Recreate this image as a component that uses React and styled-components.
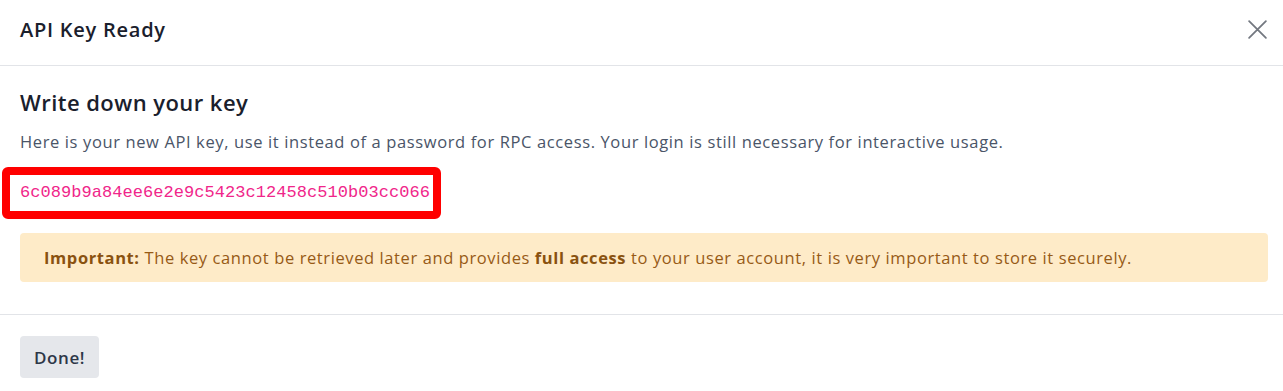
import styled, { createGlobalStyle } from "styled-components"

const Global = createGlobalStyle`
    *, *::before, *::after {
        box-sizing: border-box;
    }
    body {
        margin: 0;
        background: #fff;
        font-family: "Open Sans", "Noto Sans", sans-serif;
    }
`

export default function App() {
    return (
        <>
            <Global />
            <Modal>
                <Header>
                    <Title>API Key Ready</Title>
                    <CloseButton aria-label="Close">
                        <svg width="21" height="21" viewBox="0 0 20 20" fill="none" stroke="#737880" strokeWidth="1.7" strokeLinecap="round">
                            <path d="M2 2 L18 18 M18 2 L2 18" />
                        </svg>
                    </CloseButton>
                </Header>
                <Body>
                    <Heading>Write down your key</Heading>
                    <Text>
                        Here is your new API key, use it instead of a password for RPC access. Your login is still necessary for interactive usage.
                    </Text>
                    <Highlight>
                        <Key>6c089b9a84ee6e2e9c5423c12458c510b03cc066</Key>
                    </Highlight>
                    <Alert>
                        <strong>Important:</strong> The key cannot be retrieved later and provides <strong>full access</strong> to your user account, it is very important to store it securely.
                    </Alert>
                </Body>
                <Footer>
                    <Button>Done!</Button>
                </Footer>
            </Modal>
        </>
    )
}

const Modal = styled.div`
    width: 100%;
    background: #fff;
`

const Header = styled.div`
    display: flex;
    align-items: center;
    justify-content: space-between;
    height: 66px;
    padding: 0 15px 6px 20px;
    border-bottom: 1px solid #e2e4e8;
`

const Title = styled.h3`
    margin: 0;
    font-size: 20px;
    letter-spacing: 0.75px;
    font-weight: 600;
    color: #1a202c;
`

const CloseButton = styled.button`
    display: flex;
    padding: 0;
    border: 0;
    background: none;
    cursor: pointer;
`

const Body = styled.div`
    padding: 22px 15px 32px 20px;
    border-bottom: 1px solid #e2e4e8;
`

const Heading = styled.h2`
    margin: 0;
    font-size: 22px;
    letter-spacing: 0.45px;
    line-height: 28px;
    font-weight: 600;
    color: #1a202c;
`

const Text = styled.p`
    margin: 14px 0 13px;
    font-size: 16.5px;
    letter-spacing: 0.62px;
    line-height: 24px;
    color: #4a5568;
`

const Highlight = styled.div`
    display: inline-block;
    margin-left: -18px;
    padding: 8px 3px 8px 10px;
    border: 8px solid #ff0000;
    border-radius: 6px;
`

const Key = styled.code`
    display: block;
    font-family: "Liberation Mono", monospace;
    font-size: 17px;
    letter-spacing: 0.05px;
    line-height: 20px;
    color: #f0268a;
`

const Alert = styled.div`
    margin-top: 14px;
    padding: 12px 24px;
    border-radius: 4px;
    background: #feebc8;
    color: #975a16;
    font-size: 16.5px;
    letter-spacing: 0.6px;
    line-height: 25px;

    strong {
        font-weight: 700;
        color: #8a5210;
    }
`

const Footer = styled.div`
    padding: 21px 20px;
`

const Button = styled.button`
    height: 42px;
    padding: 0 14px;
    border: 0;
    border-radius: 4px;
    background: #e5e7eb;
    color: #2d3748;
    font-family: inherit;
    font-size: 17px;
    letter-spacing: 0.6px;
    font-weight: 600;
    cursor: pointer;
`
